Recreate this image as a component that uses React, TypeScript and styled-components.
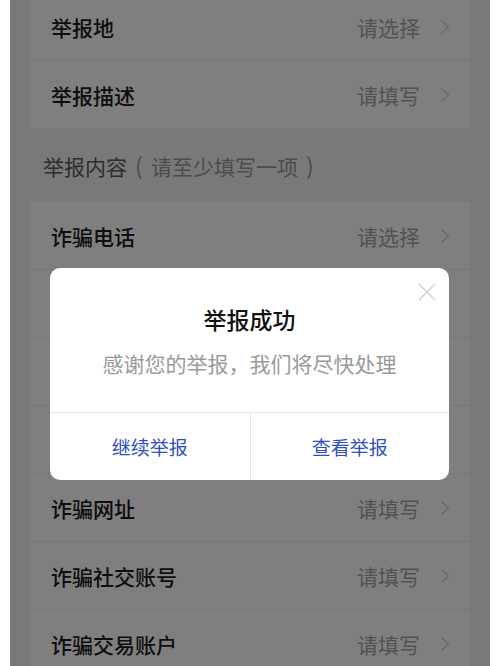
import React from 'react';
import styled, { createGlobalStyle } from 'styled-components';

const GlobalStyle = createGlobalStyle`
  html, body {
    margin: 0;
    padding: 0;
    background: #ffffff;
  }
  body {
    font-family: "Noto Sans CJK SC", "Noto Sans", sans-serif;
    -webkit-font-smoothing: antialiased;
  }
`;

const Phone = styled.div`
  position: relative;
  width: 480px;
  height: 666px;
  margin: 0 auto;
  overflow: hidden;
  background: #f3f3f3;
`;

const Page = styled.div`
  display: flex;
  flex-direction: column;
  margin-top: -7px;
`;

const Card = styled.div`
  display: flex;
  flex-direction: column;
  margin: 0 20px 0 21px;
  background: #ffffff;
`;

const Row = styled.div`
  display: flex;
  align-items: center;
  height: 67px;
  padding: 0 20px;
  border-bottom: 1px solid #ececec;

  &:last-child {
    border-bottom: none;
  }
`;

const Label = styled.span`
  flex: 1;
  font-size: 21px;
  font-weight: 500;
  color: #1c1c1c;
`;

const Placeholder = styled.span`
  font-size: 21px;
  color: #a4a4a4;
  margin-right: 20px;
`;

const SectionTitle = styled.div`
  padding: 23px 33px 22px;
  font-size: 21px;
  line-height: 28px;
  color: #5a5a5a;
`;

const Hint = styled.span`
  color: #989898;
`;

const Paren = styled.span`
  display: inline-block;
  width: 24px;
  text-align: center;
  font-size: 23px;
`;

const Overlay = styled.div`
  position: absolute;
  inset: 0;
  background: rgba(0, 0, 0, 0.5);
  display: flex;
  justify-content: flex-start;
  align-items: flex-start;
  padding: 268px 0 0 40px;
  box-sizing: border-box;
`;

const Dialog = styled.div`
  position: relative;
  width: 399px;
  background: #ffffff;
  border-radius: 10px;
  display: flex;
  flex-direction: column;
  overflow: hidden;
`;

const CloseButton = styled.button`
  position: absolute;
  top: 15px;
  right: 13px;
  width: 18px;
  height: 18px;
  padding: 0;
  border: none;
  background: none;
  display: flex;
`;

const DialogBody = styled.div`
  display: flex;
  flex-direction: column;
  align-items: center;
  height: 145px;
  padding-top: 35px;
  box-sizing: border-box;
  border-bottom: 1px solid #e6e6e6;
`;

const DialogTitle = styled.div`
  font-size: 23px;
  line-height: 32px;
  font-weight: 500;
  color: #111111;
`;

const DialogText = styled.div`
  margin-top: 14px;
  font-size: 21px;
  line-height: 28px;
  color: #9a9a9a;
`;

const Actions = styled.div`
  display: grid;
  grid-template-columns: 1fr 1fr;
  height: 67px;
`;

const ActionButton = styled.button`
  border: none;
  background: none;
  font-family: inherit;
  font-size: 19px;
  color: #2f4fbf;
  padding: 0;

  & + & {
    border-left: 1px solid #e6e6e6;
  }
`;

function Chevron() {
  return (
    <svg width="10" height="16" viewBox="0 0 10 16">
      <polyline points="1.5,1.5 8.5,8 1.5,14.5" fill="none" stroke="#d2d2d2" strokeWidth="1.3" />
    </svg>
  );
}

type Item = { label: string; hint: string };

const basicRows: Item[] = [
  { label: '举报地', hint: '请选择' },
  { label: '举报描述', hint: '请填写' },
];

// rows 2-4 sit behind the dialog, only their dividers show
const topContentRows: Item[] = [{ label: '诈骗电话', hint: '请选择' }];
const coveredRows = 3;
const bottomContentRows: Item[] = [
  { label: '诈骗网址', hint: '请填写' },
  { label: '诈骗社交账号', hint: '请填写' },
  { label: '诈骗交易账户', hint: '请填写' },
];

function FormRow({ label, hint }: Item) {
  return (
    <Row>
      <Label>{label}</Label>
      <Placeholder>{hint}</Placeholder>
      <Chevron />
    </Row>
  );
}

export default function App() {
  return (
    <>
      <GlobalStyle />
      <Phone>
        <Page>
          <Card>
            {basicRows.map((r) => (
              <FormRow key={r.label} {...r} />
            ))}
          </Card>
          <SectionTitle>
            举报内容
            <Hint>
              <Paren>(</Paren>请至少填写一项<Paren>)</Paren>
            </Hint>
          </SectionTitle>
          <Card>
            {topContentRows.map((r) => (
              <FormRow key={r.label} {...r} />
            ))}
            {Array.from({ length: coveredRows }).map((_, i) => (
              <Row key={`covered-${i}`} />
            ))}
            {bottomContentRows.map((r) => (
              <FormRow key={r.label} {...r} />
            ))}
          </Card>
        </Page>
        <Overlay>
          <Dialog>
            <CloseButton type="button" aria-label="关闭">
              <svg width="18" height="18" viewBox="0 0 18 18">
                <path d="M1 1 L17 17 M17 1 L1 17" stroke="#cfcfcf" strokeWidth="1.4" fill="none" />
              </svg>
            </CloseButton>
            <DialogBody>
              <DialogTitle>举报成功</DialogTitle>
              <DialogText>感谢您的举报，我们将尽快处理</DialogText>
            </DialogBody>
            <Actions>
              <ActionButton type="button">继续举报</ActionButton>
              <ActionButton type="button">查看举报</ActionButton>
            </Actions>
          </Dialog>
        </Overlay>
      </Phone>
    </>
  );
}
